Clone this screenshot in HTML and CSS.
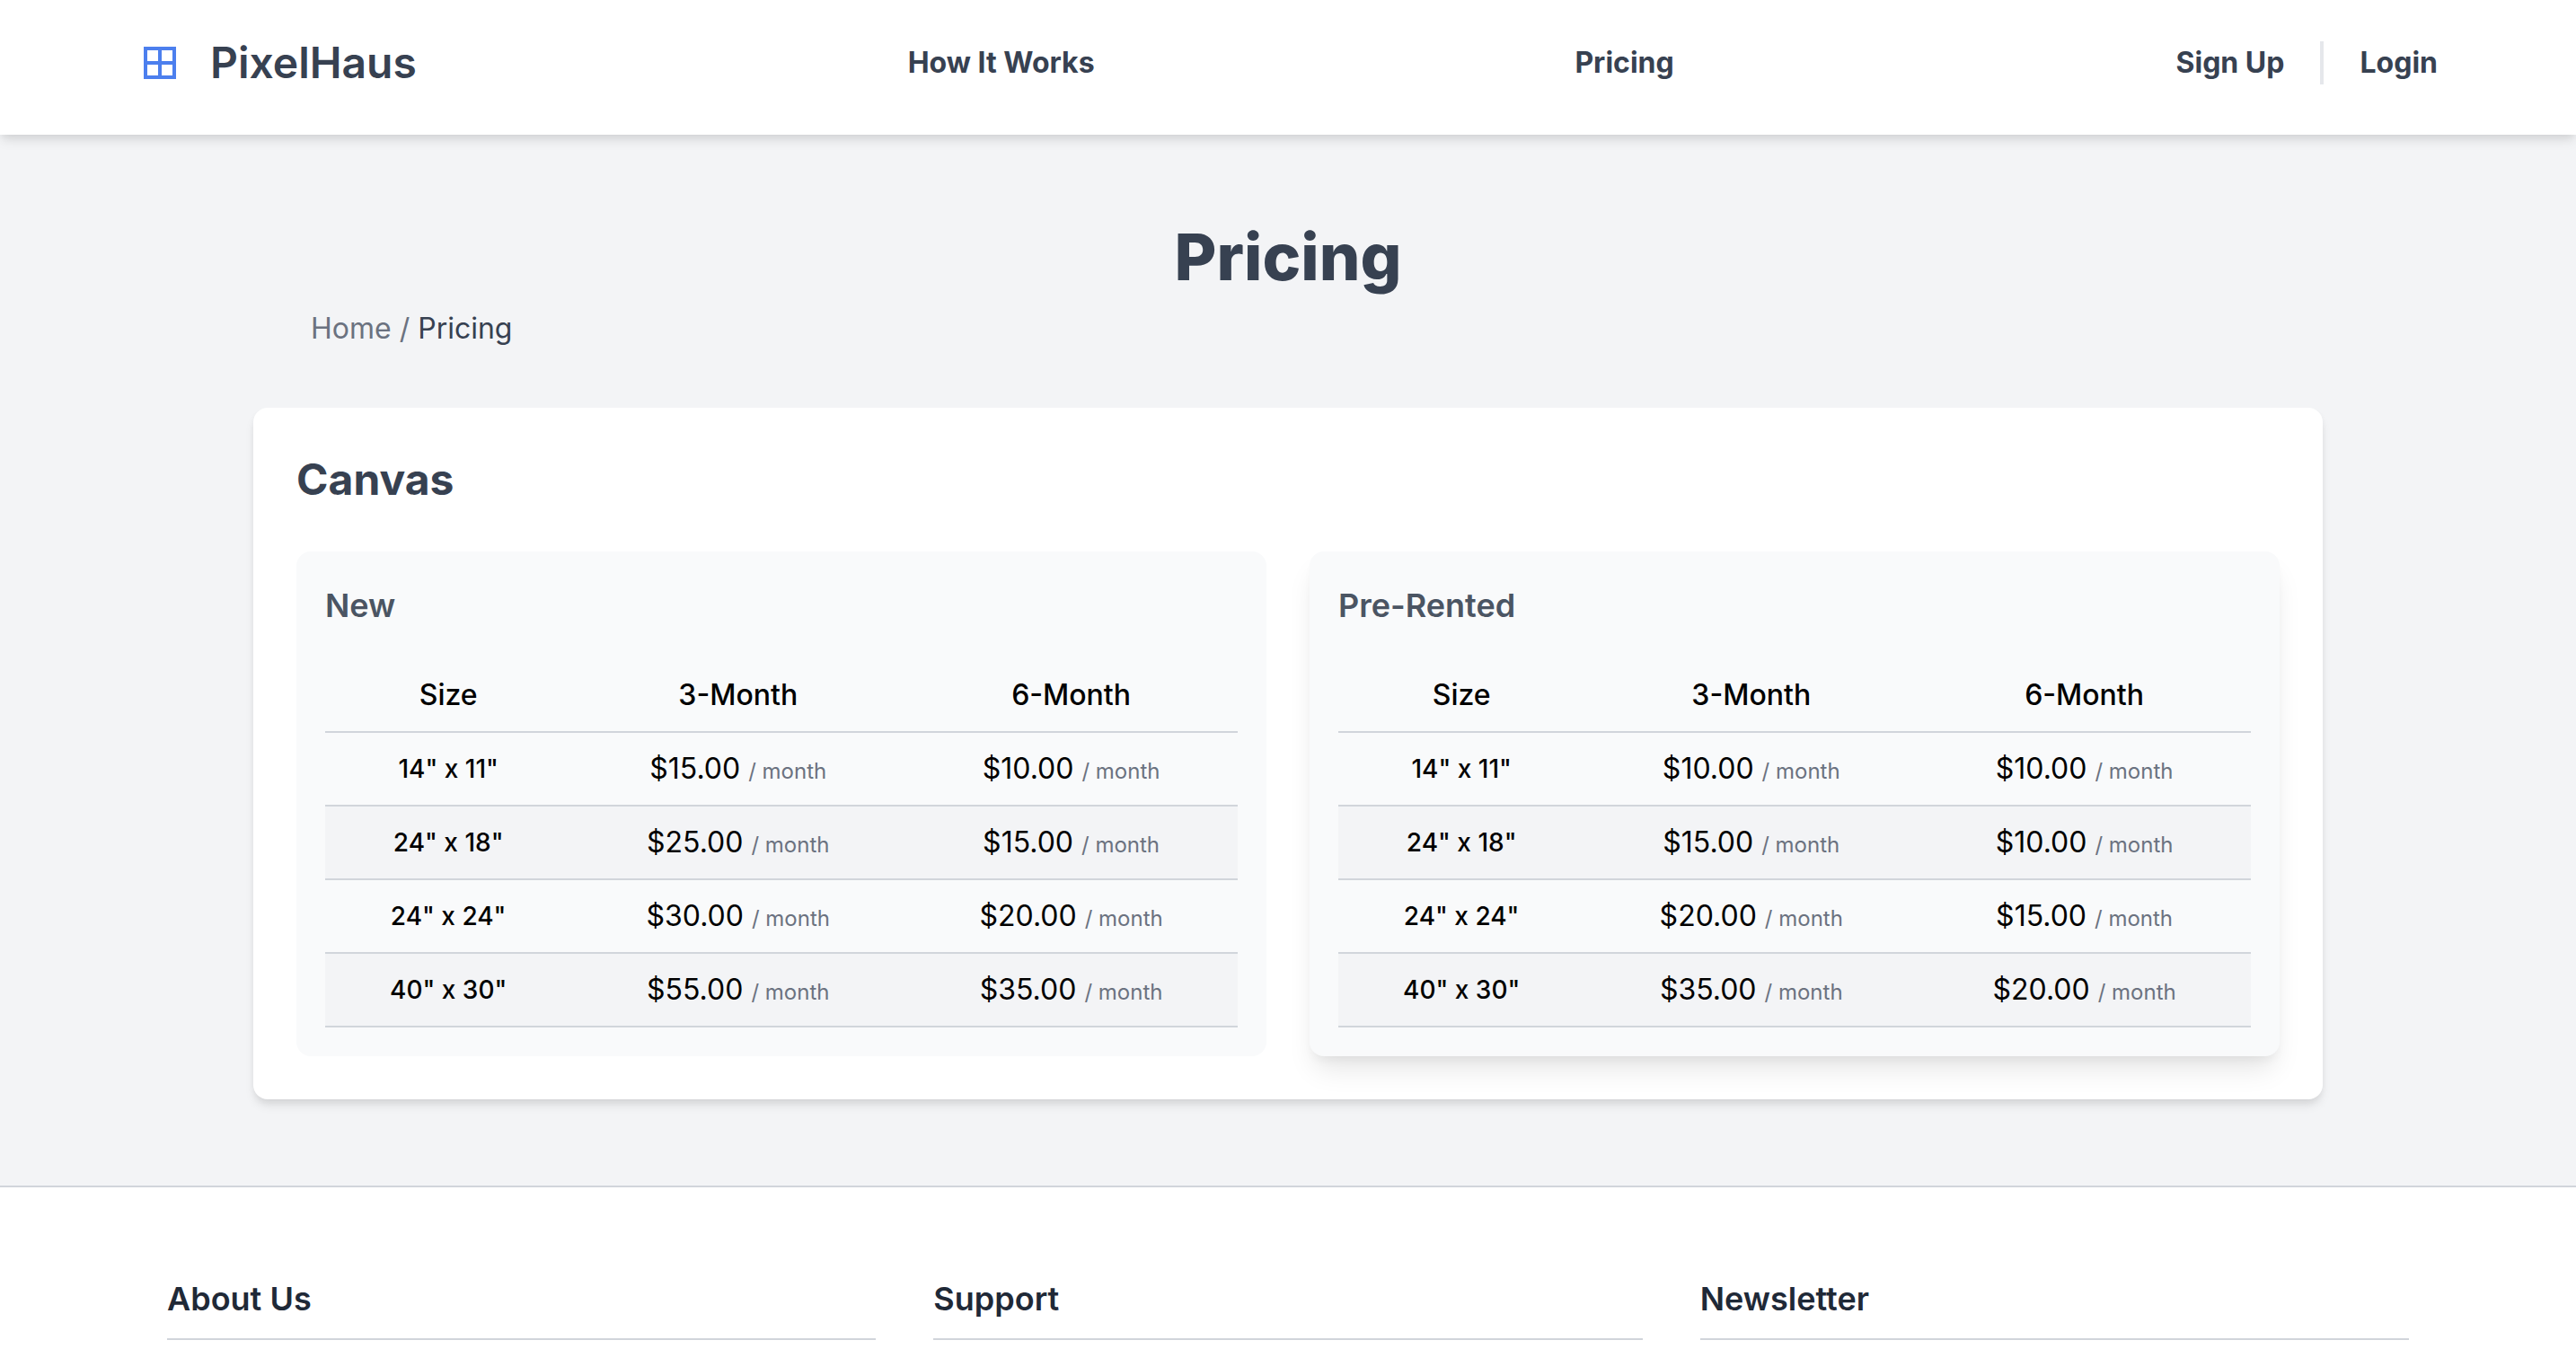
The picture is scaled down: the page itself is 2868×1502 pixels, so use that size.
FILE: index.html
```
<!DOCTYPE html>
<html lang="en">
<head>
<meta charset="utf-8">
<meta name="viewport" content="width=device-width, initial-scale=1">
<title>Pricing - PixelHaus</title>
<link rel="stylesheet" href="styles.css">
</head>
<body>
<header class="site-header">
  <nav class="nav">
    <a class="logo" href="#">
      <svg class="logo-icon" viewBox="0 0 24 24" aria-hidden="true"><path d="M4 4h16v16H4zM12 4v16M4 12h16" fill="none" stroke="currentColor" stroke-width="2"/></svg>
      <span>PixelHaus</span>
    </a>
    <a class="nav-link" href="#">How It Works</a>
    <a class="nav-link" href="#">Pricing</a>
    <div class="auth">
      <a class="nav-link auth-first" href="#">Sign Up</a>
      <a class="nav-link auth-second" href="#">Login</a>
    </div>
  </nav>
</header>

<main class="main">
  <h1 class="page-title">Pricing</h1>
  <div class="breadcrumb"><a href="#">Home</a> / <a class="current" href="#">Pricing</a></div>

  <section class="card">
    <h2 class="card-title">Canvas</h2>
    <div class="panels">
      <div class="panel">
        <h3 class="panel-title">New</h3>
        <table class="prices">
          <colgroup><col class="col-size"><col><col></colgroup>
          <thead><tr><th>Size</th><th>3-Month</th><th>6-Month</th></tr></thead>
          <tbody>
            <tr><td class="size">14" x 11"</td><td>$15.00 <span class="per">/ month</span></td><td>$10.00 <span class="per">/ month</span></td></tr>
            <tr><td class="size">24" x 18"</td><td>$25.00 <span class="per">/ month</span></td><td>$15.00 <span class="per">/ month</span></td></tr>
            <tr><td class="size">24" x 24"</td><td>$30.00 <span class="per">/ month</span></td><td>$20.00 <span class="per">/ month</span></td></tr>
            <tr><td class="size">40" x 30"</td><td>$55.00 <span class="per">/ month</span></td><td>$35.00 <span class="per">/ month</span></td></tr>
          </tbody>
        </table>
      </div>
      <div class="panel panel-raised">
        <h3 class="panel-title">Pre-Rented</h3>
        <table class="prices">
          <colgroup><col class="col-size"><col><col></colgroup>
          <thead><tr><th>Size</th><th>3-Month</th><th>6-Month</th></tr></thead>
          <tbody>
            <tr><td class="size">14" x 11"</td><td>$10.00 <span class="per">/ month</span></td><td>$10.00 <span class="per">/ month</span></td></tr>
            <tr><td class="size">24" x 18"</td><td>$15.00 <span class="per">/ month</span></td><td>$10.00 <span class="per">/ month</span></td></tr>
            <tr><td class="size">24" x 24"</td><td>$20.00 <span class="per">/ month</span></td><td>$15.00 <span class="per">/ month</span></td></tr>
            <tr><td class="size">40" x 30"</td><td>$35.00 <span class="per">/ month</span></td><td>$20.00 <span class="per">/ month</span></td></tr>
          </tbody>
        </table>
      </div>
    </div>
  </section>
</main>

<footer class="site-footer">
  <div class="footer-grid">
    <h4 class="footer-title">About Us</h4>
    <h4 class="footer-title">Support</h4>
    <h4 class="footer-title">Newsletter</h4>
  </div>
</footer>
</body>
</html>
```
FILE: styles.css
```
* { box-sizing: border-box; margin: 0; }

body {
  min-height: 100vh;
  display: flex;
  flex-direction: column;
  background: #f3f4f6;
  color: #000;
  font: 400 32px/48px Inter, sans-serif;
}

a { color: inherit; text-decoration: none; }

/* Header */
.site-header {
  position: relative;
  background: #fff;
  padding: 38px 130px 48px;
  box-shadow: 0 8px 12px -2px rgba(0, 0, 0, .1), 0 4px 8px -2px rgba(0, 0, 0, .06);
  color: #374151;
}
.nav { display: flex; justify-content: space-between; align-items: center; }
.logo {
  display: flex;
  align-items: center;
  gap: 32px;
  padding: 0 12px 0 24px;
  font-size: 48px;
  line-height: 64px;
  font-weight: 600;
}
.logo-icon { width: 48px; height: 48px; color: #4c7fee; }
.nav-link { font-weight: 700; }
.auth { display: flex; padding: 0 24px; }
.auth-first { padding-right: 40px; border-right: 4px solid #e5e7eb; }
.auth-second { padding-left: 40px; }

/* Pricing */
.main {
  width: 100%;
  max-width: 2304px;
  margin: 0 auto;
  padding: 96px 0;
}
.page-title {
  font-size: 72px;
  line-height: 80px;
  font-weight: 800;
  text-align: center;
  color: #374151;
  margin-bottom: 16px;
}
.breadcrumb { padding: 0 64px; margin-bottom: 64px; color: #6b7280; }
.breadcrumb .current { color: #374151; }

.card {
  background: #fff;
  border-radius: 16px;
  padding: 48px;
  box-shadow: 0 8px 12px -2px rgba(0, 0, 0, .1), 0 4px 8px -2px rgba(0, 0, 0, .06);
}
.card-title {
  font-size: 48px;
  line-height: 64px;
  font-weight: 700;
  color: #374151;
  margin-bottom: 48px;
}
.panels { display: grid; grid-template-columns: 1fr 1fr; gap: 48px; }
.panel { background: #f9fafb; border-radius: 16px; padding: 32px; }
.panel-raised { box-shadow: 0 20px 30px -6px rgba(0, 0, 0, .1), 0 8px 12px -4px rgba(0, 0, 0, .05); }
.panel-title {
  font-size: 36px;
  line-height: 56px;
  font-weight: 600;
  color: #4b5563;
  margin-bottom: 32px;
}

.prices {
  width: 100%;
  table-layout: fixed;
  border-spacing: 0;
  text-align: center;
}
.col-size { width: 27%; }
.prices th, .prices td {
  height: 82px;
  padding: 16px 0;
  border-bottom: 2px solid #d1d5db;
}
.prices th { font-weight: 500; }
.prices tbody tr:nth-child(even) { background: #f3f4f6; }
.prices .size { font-size: 28px; line-height: 40px; font-weight: 500; }
.per { font-size: 24px; line-height: 32px; color: #6b7280; }

/* Footer */
.site-footer {
  flex: 1;
  background: #fff;
  border-top: 2px solid #d1d5db;
}
.footer-grid {
  display: grid;
  grid-template-columns: repeat(3, 1fr);
  gap: 64px;
  max-width: 2560px;
  margin: 0 auto;
  padding: 96px 32px 0;
}
.footer-title {
  font-size: 36px;
  line-height: 56px;
  font-weight: 600;
  color: #1f2937;
  padding-bottom: 16px;
  border-bottom: 2px solid #d1d5db;
}
```
